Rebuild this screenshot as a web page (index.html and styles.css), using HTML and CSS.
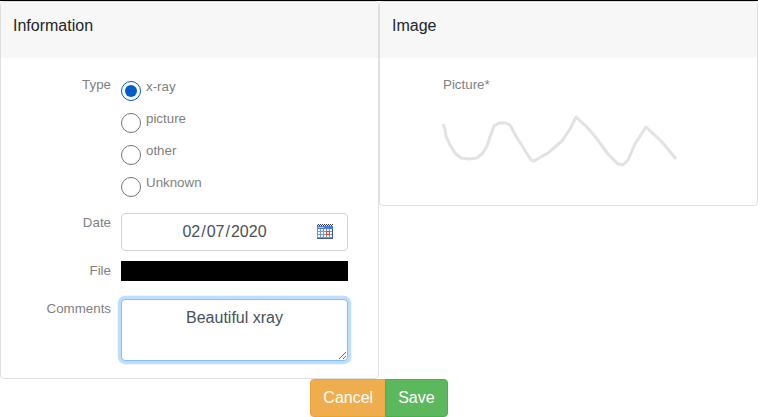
FILE: index.html
```html
<!DOCTYPE html>
<html lang="en-US">
<head>
<meta charset="utf-8">
<title>Information</title>
<link rel="stylesheet" href="styles.css">
</head>
<body>
<form class="page">
  <div class="cards">
    <section class="card">
      <h2 class="card-header">Information</h2>
      <div class="fields">
        <div class="row row-type">
          <span class="label">Type</span>
          <div class="options">
            <label class="option"><input type="radio" name="type" checked><span>x-ray</span></label>
            <label class="option"><input type="radio" name="type"><span>picture</span></label>
            <label class="option"><input type="radio" name="type"><span>other</span></label>
            <label class="option"><input type="radio" name="type"><span>Unknown</span></label>
          </div>
        </div>
        <div class="row row-date">
          <label class="label" for="date">Date</label>
          <div class="date-box">
            <input class="date-input" id="date" type="date" value="2020-02-07">
            <svg class="calendar" width="16" height="16" viewBox="0 0 16 16" shape-rendering="crispEdges">
              <path fill="#f4f4f4" d="M0 0h16v2H0z"/>
              <path fill="#333" d="M1 0h1v1H1zM3 0h1v1H3zM5 0h1v1H5zM7 0h1v1H7zM9 0h1v1H9zM11 0h1v1h-1zM13 0h1v1h-1zM15 0h1v1h-1zM0 1h1v1H0zM2 1h1v1H2zM4 1h1v1H4zM6 1h1v1H6zM8 1h1v1H8zM10 1h1v1h-1zM12 1h1v1h-1zM14 1h1v1h-1z"/>
              <path fill="#4a7be0" d="M0 2h16v3H0z"/>
              <path fill="#a9c8f6" d="M1 3h6v1H1z"/>
              <path fill="#7599cc" d="M0 5h16v9H0z"/>
              <path fill="#f5f9ff" d="M1 5h2v2H1zM4 5h2v2H4zM7 5h2v2H7zM10 5h2v2h-2zM13 5h2v2h-2zM1 8h2v2H1zM4 8h2v2H4zM7 8h2v2H7zM13 8h2v2h-2zM1 11h2v2H1zM4 11h2v2H4zM7 11h2v2H7zM10 11h2v2h-2zM13 11h2v2h-2z"/>
              <path fill="#e04a20" d="M9 7h4v4H9z"/>
              <path fill="#fff0d8" d="M10 8h2v2h-2z"/>
              <path fill="#3f5c8c" d="M0 14h16v1H0zM15 5h1v10h-1z"/>
            </svg>
          </div>
        </div>
        <div class="row row-file">
          <span class="label">File</span>
          <div class="file-bar"></div>
        </div>
        <div class="row row-comments">
          <label class="label" for="comments">Comments</label>
          <textarea class="comments" id="comments">Beautiful xray</textarea>
        </div>
      </div>
    </section>
    <section class="card card-image">
      <h2 class="card-header">Image</h2>
      <div class="picture">
        <span class="picture-label">Picture*</span>
        <svg class="sketch" width="240" height="60" viewBox="0 0 240 60">
          <path d="M3 14L5 19L6 26L10 35L15 43L21 48L29 49L37 48L43 43L47 36L51 24L54 16L59 13H66L70 15L76 26L84 39L91 50L94 51L108 43L122 31L130 19L136 7L147 17L157 29L168 44L178 54L183 55L188 50L195 34L206 17L222 32L236 49"/>
        </svg>
      </div>
    </section>
  </div>
  <div class="actions">
    <button class="btn btn-cancel" type="button">Cancel</button>
    <button class="btn btn-save" type="button">Save</button>
  </div>
</form>
</body>
</html>
```

FILE: styles.css
```css
* {
  box-sizing: border-box;
}

body {
  margin: 0;
  background: #fff;
  color: #212529;
  font: 16px/24px "Liberation Sans", Arial, sans-serif;
  overflow: hidden;
}

.page {
  border-top: 1px solid #000;
}

.cards {
  display: grid;
  grid-template-columns: 379px 379px;
  align-items: start;
}

.card {
  height: 378px;
  border: 1px solid #dfdfdf;
  border-radius: 4px;
}

.card-image {
  height: 205px;
}

.card-header {
  height: 56px;
  margin: 0;
  padding: 12px;
  border-radius: 3px 3px 0 0;
  background: #f7f7f7;
  font-size: 16px;
  font-weight: 400;
}

.row {
  display: grid;
  grid-template-columns: 110px 227px;
  column-gap: 10px;
  align-items: start;
}

.row-type {
  padding-top: 17px;
}

.row-date {
  margin-top: 10px;
}

.row-file {
  margin-top: 10px;
}

.row-comments {
  margin-top: 18px;
}

.label,
.option,
.picture-label {
  color: #808080;
  font-size: 13.33px;
  line-height: 20px;
}

.label {
  text-align: right;
}

.option {
  display: flex;
  gap: 5px;
  height: 32px;
  padding-top: 2px;
}

.option input {
  width: 20px;
  height: 20px;
  margin: 4px 0 0;
  accent-color: #005cc8;
}

.options {
  height: 128px;
}

.date-box {
  display: flex;
  align-items: center;
  height: 38px;
  border: 1px solid #ced4da;
  border-radius: 4px;
}

.date-input {
  width: 181px;
  height: 36px;
  margin-left: 12px;
  padding: 0;
  border: 0;
  background: transparent;
  color: #495057;
  font: inherit;
  text-align: center;
}

.date-input::-webkit-calendar-picker-indicator {
  display: none;
}

.calendar {
  display: block;
  margin-left: 2px;
}

.file-bar {
  height: 20px;
  background: #000;
}

.comments {
  display: block;
  width: 227px;
  height: 62px;
  margin: 0;
  padding: 6px 12px;
  border: 1px solid #80bdff;
  border-radius: 4px;
  outline: 0;
  box-shadow: 0 0 0 3.2px rgba(0, 123, 255, .25);
  color: #495057;
  font: inherit;
  text-align: center;
}

.picture {
  display: flex;
  flex-direction: column;
  padding: 17px 0 0 63px;
}

.sketch {
  display: block;
  margin: 15px 0 0 -3px;
  filter: blur(.7px);
}

.sketch path {
  fill: none;
  stroke: #e2e2e2;
  stroke-width: 3;
  stroke-linejoin: round;
}

.actions {
  display: flex;
  justify-content: center;
}

.btn {
  height: 38px;
  padding: 6px 12px;
  border: 1px solid;
  color: #fff;
  font: inherit;
}

.btn-cancel {
  border-color: #eea236;
  border-radius: 4px 0 0 4px;
  background: #f0ad4e;
}

.btn-save {
  margin-left: -1px;
  border-color: #4cae4c;
  border-radius: 0 4px 4px 0;
  background: #5cb85c;
}
```
